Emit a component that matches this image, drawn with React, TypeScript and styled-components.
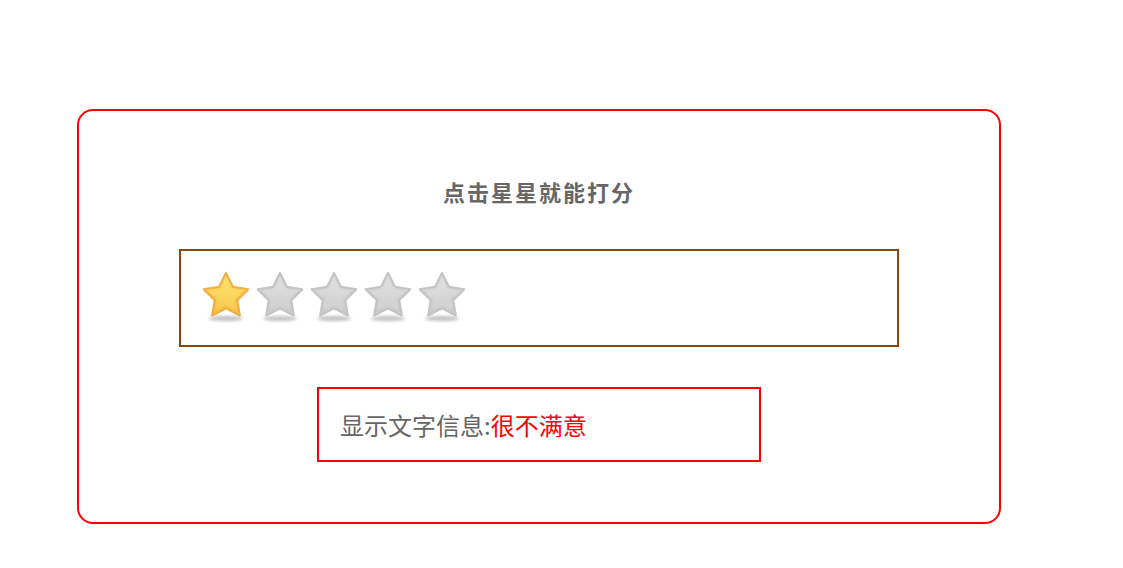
import React from "react";
import styled, { createGlobalStyle } from "styled-components";

const Global = createGlobalStyle`
  html, body { margin: 0; padding: 0; background: #fff; }
  * { box-sizing: border-box; }
  body { font-family: "Noto Sans CJK SC", "Noto Sans", sans-serif; }
`;

const Page = styled.div`
  padding: 109px 0 0 77px;
`;

const Card = styled.div`
  width: 924px;
  height: 415px;
  border: 2px solid #ff0000;
  border-radius: 16px;
  display: flex;
  flex-direction: column;
  align-items: center;
  padding-top: 67px;
`;

const Title = styled.h3`
  margin: 0;
  font-size: 22px;
  line-height: 26px;
  font-weight: 700;
  color: #666;
  letter-spacing: 2px;
`;

const StarBox = styled.div`
  margin-top: 45px;
  width: 720px;
  height: 98px;
  border: 2px solid #8b4513;
  display: flex;
  align-items: center;
  padding-left: 18px;
`;

const StarButton = styled.span`
  display: inline-flex;
  width: 54px;
  height: 54px;
  cursor: pointer;
`;

const InfoBox = styled.div`
  margin-top: 40px;
  width: 444px;
  height: 75px;
  border: 2px solid #ff0000;
  display: flex;
  align-items: center;
  padding-left: 21px;
  font-size: 24px;
  color: #666;
`;

const Value = styled.span`
  color: #ff0000;
`;

function starPath(cx: number, cy: number, R: number, r: number) {
  const pts: string[] = [];
  for (let i = 0; i < 10; i++) {
    const rad = i % 2 === 0 ? R : r;
    const a = (Math.PI / 5) * i - Math.PI / 2;
    pts.push(`${(cx + rad * Math.cos(a)).toFixed(2)} ${(cy + rad * Math.sin(a)).toFixed(2)}`);
  }
  return "M" + pts.join(" L") + " Z";
}

const STAR = starPath(27, 27.5, 23.5, 11.8);
const SHINE = starPath(27, 27.5, 17, 8.5);

function Star({ on, id }: { on: boolean; id: number }) {
  const g = `g${id}`;
  return (
    <StarButton>
      <svg width="54" height="54" viewBox="0 0 54 54">
        <defs>
          <linearGradient id={g} x1="0" y1="0" x2="0" y2="1">
            {on ? (
              <>
                <stop offset="0" stopColor="#ffe463" />
                <stop offset="1" stopColor="#f7be38" />
              </>
            ) : (
              <>
                <stop offset="0" stopColor="#dedede" />
                <stop offset="1" stopColor="#c9c9c9" />
              </>
            )}
          </linearGradient>
          <filter id={`b${id}`} x="-50%" y="-50%" width="200%" height="200%">
            <feGaussianBlur stdDeviation="1.6" />
          </filter>
        </defs>
        <ellipse cx="27" cy="49.5" rx="17" ry="2.8" fill="#b0b0b0" opacity="0.75" filter={`url(#b${id})`} />
        <path
          d={STAR}
          fill={`url(#${g})`}
          stroke={on ? "#f2ae4a" : "#c4c4c4"}
          strokeWidth="2.2"
          strokeLinejoin="round"
        />
        <path d={SHINE} fill="#fff" opacity={on ? 0.12 : 0.1} />
      </svg>
    </StarButton>
  );
}

export default function App() {
  const [score, setScore] = React.useState(1);
  const labels = ["很不满意", "不满意", "一般", "满意", "非常满意"];
  return (
    <Page>
      <Global />
      <Card>
        <Title>点击星星就能打分</Title>
        <StarBox>
          {[1, 2, 3, 4, 5].map((n) => (
            <span key={n} onClick={() => setScore(n)}>
              <Star on={n <= score} id={n} />
            </span>
          ))}
        </StarBox>
        <InfoBox>
          显示文字信息:<Value>{labels[score - 1]}</Value>
        </InfoBox>
      </Card>
    </Page>
  );
}
